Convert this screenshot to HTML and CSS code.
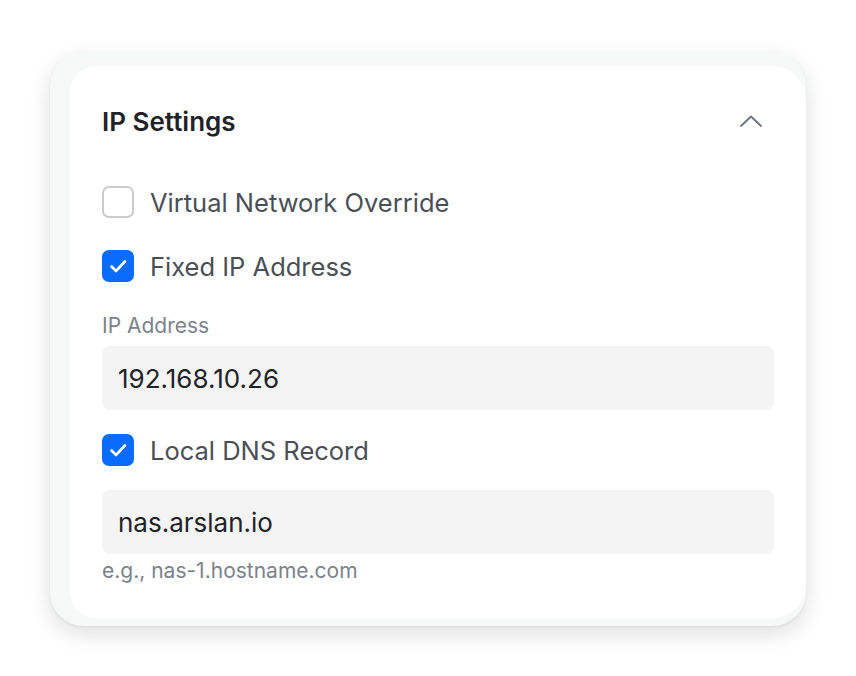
FILE: index.html
```html
<!DOCTYPE html>
<html>
<head>
<meta charset="utf-8">
<link rel="stylesheet" href="styles.css">
</head>
<body>
<div class="card">
  <div class="panel">
    <div class="header">
      <div class="title">IP Settings</div>
      <svg class="chevron" width="22" height="12" viewBox="0 0 22 12"><path d="M1 11 L11 1.5 L21 11" fill="none" stroke="#6b7280" stroke-width="1.8" stroke-linecap="round" stroke-linejoin="round"/></svg>
    </div>
    <div class="row first">
      <span class="box"></span>
      <span class="label">Virtual Network Override</span>
    </div>
    <div class="row second">
      <span class="box checked"><svg width="32" height="32" viewBox="0 0 32 32"><path d="M9.5 16.5 L14 21 L23 11.5" fill="none" stroke="#fff" stroke-width="2.6" stroke-linecap="round" stroke-linejoin="round"/></svg></span>
      <span class="label">Fixed IP Address</span>
    </div>
    <div class="field-label">IP Address</div>
    <div class="input">192.168.10.26</div>
    <div class="row third">
      <span class="box checked"><svg width="32" height="32" viewBox="0 0 32 32"><path d="M9.5 16.5 L14 21 L23 11.5" fill="none" stroke="#fff" stroke-width="2.6" stroke-linecap="round" stroke-linejoin="round"/></svg></span>
      <span class="label">Local DNS Record</span>
    </div>
    <div class="input second-input">nas.arslan.io</div>
    <div class="helper">e.g., nas-1.hostname.com</div>
  </div>
</div>
</body>
</html>
```
FILE: styles.css
```css
html, body {
  margin: 0;
  padding: 0;
  background: #ffffff;
}
body {
  width: 856px;
  height: 676px;
  font-family: Inter, "Noto Sans", sans-serif;
}
.card {
  position: relative;
  margin: 52px 0 0 50px;
  width: 756px;
  box-sizing: border-box;
  padding: 14px 0 8px 20px;
  background: #f7f8f8;
  border-radius: 34px;
  box-shadow: 0 8px 22px rgba(0, 0, 0, 0.13), 0 1px 3px rgba(0, 0, 0, 0.05);
}
.panel {
  background: #ffffff;
  border-radius: 26px 34px 34px 26px;
  padding: 31px 32px 35px 32px;
  display: flex;
  flex-direction: column;
}
.header {
  height: 48px;
  display: flex;
  align-items: center;
  justify-content: space-between;
}
.title {
  font-size: 26px;
  font-weight: 600;
  color: #1f2328;
}
.chevron {
  margin-right: 12px;
}
.row {
  display: flex;
  align-items: center;
  height: 32px;
}
.row.first { margin-top: 41px; }
.row.second { margin-top: 32px; }
.row.third { margin-top: 24px; }
.box {
  width: 32px;
  height: 32px;
  box-sizing: border-box;
  border: 2px solid #c9cbce;
  border-radius: 7px;
  flex: none;
  display: flex;
}
.box.checked {
  border: none;
  background: #0a6cff;
}
.label {
  margin-left: 16px;
  font-size: 25.5px;
  color: #4a4f57;
}
.field-label {
  margin-top: 32px;
  font-size: 21px;
  line-height: 24px;
  color: #7b828c;
}
.input {
  margin-top: 8px;
  height: 64px;
  box-sizing: border-box;
  padding-left: 16px;
  display: flex;
  align-items: center;
  background: #f4f4f5;
  border-radius: 8px;
  font-size: 26px;
  color: #1f2328;
}
.second-input { margin-top: 24px; }
.helper {
  margin-top: 5px;
  font-size: 21px;
  line-height: 24px;
  color: #7b828c;
}
```
